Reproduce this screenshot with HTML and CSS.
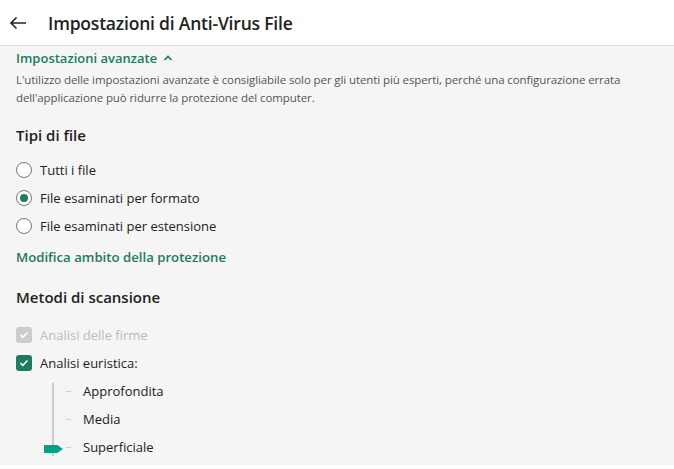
FILE: index.html
```html
<!DOCTYPE html>
<html lang="it">
<head>
    <meta charset="UTF-8">
    <meta name="viewport" content="width=device-width, initial-scale=1.0">
    <title>Impostazioni di Anti-Virus File</title>
    <link rel="stylesheet" href="styles.css">
</head>
<body>
    <div class="header">
        <span class="back">
            <svg width="18" height="14" viewBox="0 0 18 14"><path d="M17 7H2M7.5 1.5L2 7l5.5 5.5" fill="none" stroke="#222" stroke-width="1.6"/></svg>
        </span>
        <h1>Impostazioni di Anti-Virus File</h1>
    </div>
    <div class="content">
        <div class="advanced">
            Impostazioni avanzate
            <svg width="10" height="8" viewBox="0 0 10 8"><path d="M1.5 6L5 2.5 8.5 6" fill="none" stroke="#1e7a60" stroke-width="1.6"/></svg>
        </div>
        <p class="note">L'utilizzo delle impostazioni avanzate è consigliabile solo per gli utenti più esperti, perché una configurazione errata<br>dell'applicazione può ridurre la protezione del computer.</p>

        <h2>Tipi di file</h2>
        <div class="options">
            <label class="radio"><span class="circle"></span>Tutti i file</label>
            <label class="radio"><span class="circle on"></span>File esaminati per formato</label>
            <label class="radio"><span class="circle"></span>File esaminati per estensione</label>
        </div>
        <a class="link">Modifica ambito della protezione</a>

        <h2 class="methods">Metodi di scansione</h2>
        <div class="options checks">
            <label class="check disabled"><span class="box"><svg width="10" height="8" viewBox="0 0 10 8"><path d="M1.5 4l2.3 2.3L8.5 1.5" fill="none" stroke="#fff" stroke-width="1.6"/></svg></span>Analisi delle firme</label>
            <label class="check"><span class="box"><svg width="10" height="8" viewBox="0 0 10 8"><path d="M1.5 4l2.3 2.3L8.5 1.5" fill="none" stroke="#fff" stroke-width="1.6"/></svg></span>Analisi euristica:</label>
        </div>
        <div class="slider">
            <div class="track">
                <span class="thumb"></span>
            </div>
            <div class="levels">
                <div class="level"><span class="tick"></span>Approfondita</div>
                <div class="level"><span class="tick"></span>Media</div>
                <div class="level"><span class="tick"></span>Superficiale</div>
            </div>
        </div>
    </div>
</body>
</html>
```

FILE: styles.css
```css
body {
    margin: 0;
    font-family: "Open Sans", "Noto Sans", sans-serif;
    color: #222;
    background: #fff;
}
.header {
    height: 46px;
    display: flex;
    align-items: center;
    border-bottom: 1px solid #ddd;
    box-sizing: border-box;
}
.back {
    width: 48px;
    display: flex;
    justify-content: center;
    margin-left: -6px;
    margin-right: 6px;
}
.header h1 {
    font-size: 17.5px;
    font-weight: 600;
    margin: 0;
    letter-spacing: -0.2px;
}
.content {
    background: #f5f5f5;
    padding: 3px 16px 0;
    height: 416px;
    overflow: hidden;
}
.advanced {
    color: #1e7a60;
    font-size: 13px;
    font-weight: 600;
    display: flex;
    align-items: center;
    gap: 6px;
    height: 18px;
}
.note {
    font-size: 11.5px;
    line-height: 18px;
    color: #555;
    margin: 4px 0 0;
    letter-spacing: -0.1px;
}
h2 {
    font-size: 15px;
    font-weight: 600;
    margin: 17px 0 10px;
    height: 22px;
    line-height: 22px;
}
h2.methods {
    margin-top: 18px;
}
.options {
    display: flex;
    flex-direction: column;
}
.checks {
    margin-top: 13px;
}
.radio, .check {
    display: flex;
    align-items: center;
    height: 28px;
    font-size: 13px;
    gap: 8px;
}
.circle {
    width: 14px;
    height: 14px;
    border: 1px solid #777;
    border-radius: 50%;
    background: #fff;
    position: relative;
}
.circle.on::after {
    content: "";
    position: absolute;
    left: 3px;
    top: 3px;
    width: 8px;
    height: 8px;
    border-radius: 50%;
    background: #1e7a60;
}
.link {
    display: block;
    color: #1e7a60;
    font-size: 13.2px;
    font-weight: 600;
    margin-top: 8px;
    height: 20px;
}
.box {
    width: 16px;
    height: 16px;
    border-radius: 3px;
    background: #1e7a60;
    display: flex;
    align-items: center;
    justify-content: center;
}
.check.disabled {
    color: #bbb;
}
.check.disabled .box {
    background: #ccc;
}
.slider {
    display: flex;
    margin-left: 36px;
}
.track {
    width: 2px;
    height: 73px;
    margin-top: 6px;
    background: #ccc;
    position: relative;
}
.thumb {
    position: absolute;
    left: -8px;
    bottom: 3px;
    width: 19px;
    height: 8px;
    background: #00a386;
    clip-path: polygon(0 0, 70% 0, 100% 50%, 70% 100%, 0 100%);
}
.levels {
    display: flex;
    flex-direction: column;
}
.level {
    display: flex;
    align-items: center;
    flex-shrink: 0;
    height: 28px;
    font-size: 13px;
}
.tick {
    width: 5px;
    height: 1px;
    background: #ccc;
    margin: 0 12px 0 12px;
}
```
